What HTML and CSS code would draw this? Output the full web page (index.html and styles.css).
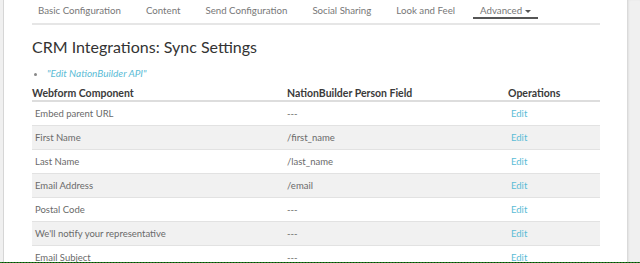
FILE: index.html
```html
<!DOCTYPE html>
<html lang="en">
<head>
    <meta charset="UTF-8">
    <meta name="viewport" content="width=device-width, initial-scale=1.0">
    <title>CRM Integrations: Sync Settings</title>
    <link rel="stylesheet" href="styles.css">
</head>
<body>
    <div class="frame">
        <div class="gutter-left"></div>
        <main class="panel">
            <nav class="tabs">
                <ul>
                    <li><a href="#">Basic Configuration</a></li>
                    <li><a href="#">Content</a></li>
                    <li><a href="#">Send Configuration</a></li>
                    <li><a href="#">Social Sharing</a></li>
                    <li><a href="#">Look and Feel</a></li>
                    <li class="active"><a href="#">Advanced <span class="caret"></span></a></li>
                </ul>
            </nav>

            <h2 class="page-title">CRM Integrations: Sync Settings</h2>

            <ul class="action-links">
                <li><a href="#">"Edit NationBuilder API"</a></li>
            </ul>

            <table class="sync-table">
                <thead>
                    <tr>
                        <th class="col-component">Webform Component</th>
                        <th class="col-field">NationBuilder Person Field</th>
                        <th>Operations</th>
                    </tr>
                </thead>
                <tbody>
                    <tr><td>Embed parent URL</td><td>---</td><td><a href="#">Edit</a></td></tr>
                    <tr><td>First Name</td><td>/first_name</td><td><a href="#">Edit</a></td></tr>
                    <tr><td>Last Name</td><td>/last_name</td><td><a href="#">Edit</a></td></tr>
                    <tr><td>Email Address</td><td>/email</td><td><a href="#">Edit</a></td></tr>
                    <tr><td>Postal Code</td><td>---</td><td><a href="#">Edit</a></td></tr>
                    <tr><td>We'll notify your representative</td><td>---</td><td><a href="#">Edit</a></td></tr>
                    <tr><td>Email Subject</td><td>---</td><td><a href="#">Edit</a></td></tr>
                </tbody>
            </table>
        </main>
        <div class="gutter-right"></div>
    </div>
    <div class="status-line"></div>
</body>
</html>
```

FILE: styles.css
```css
:root {
    --text-color: #333;
    --muted-color: #6a6a6a;
    --link-color: #5bbcd6;
    --border-color: #e2e2e2;
    --stripe-bg: #f1f1f1;
    --gutter-bg: #f0f0f0;
}

* {
    margin: 0;
    padding: 0;
    box-sizing: border-box;
}

body {
    font-family: Lato, 'Open Sans', Arial, sans-serif;
    color: var(--text-color);
    background-color: white;
}

.frame {
    display: flex;
    height: 262px;
    overflow: hidden;
}

.gutter-left {
    width: 4px;
    background-color: var(--gutter-bg);
    border-right: 1px solid #d6d6d6;
}

.gutter-right {
    width: 13px;
    background-color: var(--gutter-bg);
    border-left: 1px solid #dadada;
    box-shadow: inset 1px 0 2px rgba(0,0,0,0.06);
}

.panel {
    flex: 1;
    padding: 0 27px 0 28px;
    background-color: white;
}

/* tabs */
.tabs {
    border-bottom: 2px solid #e6e6e6;
}

.tabs ul {
    display: flex;
    list-style: none;
    gap: 11px;
    margin-left: -1px;
}

.tabs li {
    display: flex;
    font-size: 9.7px;
    line-height: 12px;
    padding: 4px 7px 1px;
    border-bottom: 2px solid transparent;
    margin-bottom: 4px;
}

.tabs li.active {
    border-bottom-color: #555;
}

.tabs a {
    color: #777;
    text-decoration: none;
    display: inline-flex;
    align-items: center;
}

.caret {
    display: inline-block;
    margin-left: 3px;
    margin-top: 3px;
    border-left: 3px solid transparent;
    border-right: 3px solid transparent;
    border-top: 3px solid #555;
}

.page-title {
    font-size: 16px;
    font-weight: 400;
    color: #333;
    margin-top: 12px;
    line-height: 20px;
}

.action-links {
    margin: 10px 0 0 15px;
    font-size: 10px;
    color: #888;
    line-height: 12px;
}

.action-links a {
    color: var(--link-color);
    font-style: italic;
    text-decoration: none;
}

/* table */
.sync-table {
    width: 100%;
    border-collapse: collapse;
    margin-top: 4px;
    font-size: 9.5px;
}

.sync-table th {
    text-align: left;
    font-size: 10.5px;
    font-weight: 700;
    color: #3a3a3a;
    padding: 4px 0 0;
    line-height: 13px;
    border-bottom: 2px solid #ddd;
}

.sync-table .col-component {
    width: 255px;
}

.sync-table .col-field {
    width: 221px;
}

.sync-table td {
    height: 24px;
    padding: 0 3px;
    color: var(--muted-color);
    border-bottom: 1px solid var(--border-color);
    vertical-align: middle;
}

.sync-table td:nth-child(2) {
    padding-left: 0;
}

.sync-table tbody tr:nth-child(even) td {
    background-color: var(--stripe-bg);
}

.sync-table td a {
    color: var(--link-color);
    text-decoration: none;
}

.status-line {
    height: 1px;
    background: repeating-linear-gradient(90deg, #1e7a1e 0 2px, #0b3d0b 2px 3px);
}
```
